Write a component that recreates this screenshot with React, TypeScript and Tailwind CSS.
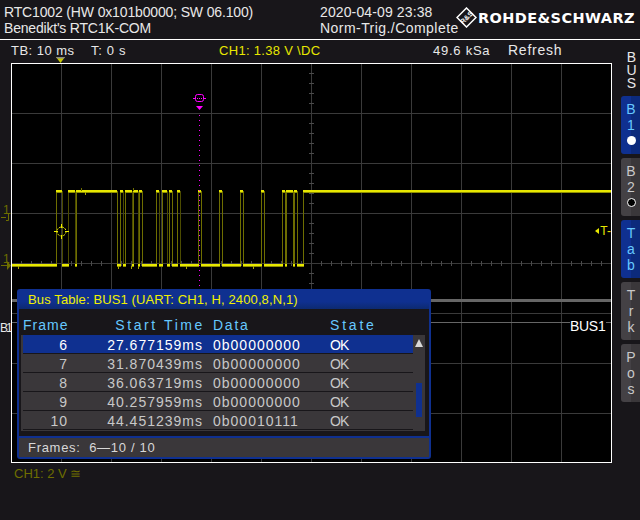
import React from 'react';

const highs: [number, number][] = [
  [56, 62], [68, 75], [76, 117], [120, 123], [125, 132], [133, 138], [139, 142],
  [156, 159], [162, 167], [169, 172], [177, 180], [198, 201], [219, 222], [240, 243],
  [261, 264], [282, 285], [286, 293], [294, 297], [303, 611],
];

const rows = [
  { frame: '6', time: '27.677159ms', data: '0b00000000' },
  { frame: '7', time: '31.870439ms', data: '0b00000000' },
  { frame: '8', time: '36.063719ms', data: '0b00000000' },
  { frame: '9', time: '40.257959ms', data: '0b00000000' },
  { frame: '10', time: '44.451239ms', data: '0b00010111' },
];

const range = (from: number, to: number, step: number) => {
  const out: number[] = [];
  for (let v = from; v <= to; v += step) out.push(v);
  return out;
};

const Level: React.FC<{ x: number; y: number; w: number }> = ({ x, y, w }) => (
  <>
    <rect x={x} y={y} width={w} height={3} fill="#8f8f00" />
    <rect x={x} y={y} width={w} height={2} fill="#e8e800" />
  </>
);

const Scope: React.FC = () => {
  const lows: [number, number][] = [];
  let prev = 12;
  highs.forEach(([a, b]) => {
    lows.push([prev, a + 1]);
    prev = b;
  });

  return (
    <svg className="absolute inset-0 h-full w-full" viewBox="12 64 599 398" shapeRendering="crispEdges">
      {range(61, 561, 50).map((x) => (
        <line key={x} x1={x + 0.5} x2={x + 0.5} y1={64} y2={462} stroke="#3a3a3a" />
      ))}
      {range(113, 413, 50).map((y) => (
        <line key={y} x1={12} x2={611} y1={y + 0.5} y2={y + 0.5} stroke="#3a3a3a" />
      ))}
      {range(21, 601, 10).filter((x) => x % 50 !== 11).map((x) => (
        <line key={x} x1={x + 0.5} x2={x + 0.5} y1={261} y2={266} stroke="#4a4a4a" />
      ))}
      {range(73, 453, 10).filter((y) => y % 50 !== 13).map((y) => (
        <line key={y} x1={309} x2={314} y1={y + 0.5} y2={y + 0.5} stroke="#4a4a4a" />
      ))}

      <rect x={12} y={299} width={599} height={3} fill="#666666" />
      <line x1={12} x2={570} y1={322.5} y2={322.5} stroke="#666666" />
      <line x1={606} x2={611} y1={322.5} y2={322.5} stroke="#666666" />

      {highs.map(([a, b]) => (
        <g key={a} stroke="#6e6e00">
          <line x1={a + 0.5} x2={a + 0.5} y1={191} y2={266} />
          {b < 600 && <line x1={b + 0.5} x2={b + 0.5} y1={191} y2={266} />}
        </g>
      ))}
      {[62.5, 68.5, 75.5, 123.5, 132.5, 138.5, 159.5, 167.5, 180.5].map((x) => (
        <line key={x} x1={x} x2={x} y1={191} y2={266} stroke="#4c4c00" />
      ))}
      {highs.map(([a, b]) => (
        <Level key={a} x={a} y={190} w={b - a} />
      ))}
      {lows.map(([a, b]) => (
        <Level key={a} x={a} y={264} w={b - a} />
      ))}
      {[18, 118, 131, 138, 186, 253].map((x) => (
        <line key={x} x1={x + 0.5} x2={x + 0.5} y1={266} y2={269} stroke="#a8a800" />
      ))}
      <line x1={85.5} x2={85.5} y1={192} y2={195} stroke="#a8a800" />
      <line x1={81.5} x2={81.5} y1={188} y2={191} stroke="#6e6e00" />
      <line x1={133.5} x2={133.5} y1={188} y2={191} stroke="#6e6e00" />

      <circle cx={61.5} cy={231.5} r={4.5} fill="none" stroke="#f0f000" strokeDasharray="2 1" shapeRendering="auto" />
      <path d="M54 231.5h4M65 231.5h4M61.5 224v4M61.5 235v4" stroke="#f0f000" />

      {range(115, 285, 5).map((y) => (
        <rect key={y} x={199} y={y} width={1} height={1} fill="#ff00ff" />
      ))}
      <rect x={195.5} y={94.5} width={8} height={7} rx={2} fill="none" stroke="#ff00ff" shapeRendering="auto" />
      <path d="M193 98.5h3M203 98.5h3" stroke="#ff00ff" />
      <path d="M197 98.5h5" stroke="#ff00ff" strokeDasharray="1 1" />
      <path d="M196 106h7l-3.5 4z" fill="#ff00ff" shapeRendering="auto" />
    </svg>
  );
};

const SideButton: React.FC<{ active?: boolean; children: React.ReactNode }> = ({ active, children }) => (
  <div
    className={
      active
        ? 'flex h-[58px] flex-col items-center rounded-l-[3px] bg-[linear-gradient(90deg,#0f3090_50%,#0c2a7c_50%)] pl-[1px] pt-[5px] text-[14px] leading-[16px] text-[#66c8ff]'
        : 'flex h-[58px] flex-col items-center rounded-l-[3px] bg-[linear-gradient(90deg,#444145_50%,#3a373a_50%)] pl-[1px] pt-[5px] text-[14px] leading-[16px] text-[#c8c8c8]'
    }
  >
    {children}
  </div>
);

export default function App() {
  return (
    <div className="flex h-[520px] w-[640px] flex-col overflow-hidden bg-[#18161a] font-['Liberation_Sans',sans-serif] text-[#e8e8e8]">
      <header className="flex h-[40px] shrink-0 border-b border-white pt-[4px] text-[14px] leading-[16px]">
        <div className="w-[320px] whitespace-nowrap pl-[4px]">
          <div className="tracking-[-0.15px]">RTC1002 (HW 0x101b0000; SW 06.100)</div>
          <div className="tracking-[-0.2px]">Benedikt's RTC1K-COM</div>
        </div>
        <div className="w-[136px] whitespace-nowrap">
          <div className="tracking-[0.12px]">2020-04-09 23:38</div>
          <div className="tracking-[0.45px]">Norm-Trig./Complete</div>
        </div>
        <div className="flex items-center gap-[1px] pb-[8px]">
          <svg width="21" height="21" viewBox="0 0 21 21">
            <path d="M10.5 1 20 10.5 10.5 20 1 10.5z" fill="none" stroke="#ffffff" strokeWidth="1.5" />
            <text x="10.5" y="13" fontSize="7" fontWeight="700" fill="#ffffff" textAnchor="middle" transform="rotate(-45 10.5 10.5)" fontFamily="Liberation Sans">R&amp;S</text>
          </svg>
          <span className="whitespace-nowrap font-['DejaVu_Sans',sans-serif] text-[14.5px] font-bold tracking-[0.4px] text-white">ROHDE&amp;SCHWARZ</span>
        </div>
      </header>

      <div className="flex flex-1">
        <div className="flex w-[621px] shrink-0 flex-col">
          <div className="relative flex h-[23px] items-center whitespace-nowrap pb-[2px] text-[13px]">
            <span className="ml-[11px] w-[80px] tracking-[0.47px]">TB: 10 ms</span>
            <span className="w-[128px] tracking-[0.67px]">T: 0 s</span>
            <span className="w-[214px] tracking-[0.3px] text-[#e8e800]">CH1: 1.38 V \DC</span>
            <span className="w-[75px] tracking-[0.75px]">49.6 kSa</span>
            <span className="text-[14px] tracking-[0.75px]">Refresh</span>
            <svg className="absolute left-[56px] top-[17px]" width="10" height="6" viewBox="0 0 10 6">
              <path d="M0 0h9L4.5 6z" fill="#c8c800" />
              <path d="M0 0h9L8 1.5H1z" fill="#888888" />
            </svg>
          </div>

          <div className="flex h-[400px]">
            <div className="relative w-[11px] text-[#6e6e00]">
              <span className="absolute left-[3px] top-[140px] text-[12px] leading-[14px]">1</span>
              <svg className="absolute left-[1px] top-[148px]" width="10" height="12" viewBox="0 0 10 12">
                <path d="M0 6.5h5M9.5 2.5H7.5V9.5H5" fill="none" stroke="#6e6e00" />
              </svg>
              <span className="absolute left-[3px] top-[189px] text-[12px] leading-[14px]">1</span>
              <svg className="absolute left-[1px] top-[197px]" width="10" height="10" viewBox="0 0 10 10">
                <path d="M0 5.5h6" stroke="#6e6e00" />
                <path d="M6 1l4 4.5L6 10z" fill="#6e6e00" />
              </svg>
              <span className="absolute left-0 top-[257px] text-[12px] leading-[16px] tracking-[-2px] text-[#e8e8e8]">B1</span>
            </div>

            <div className="relative h-[400px] w-[601px] border border-white bg-black">
              <Scope />

              <div className="absolute right-0 top-[160px] flex items-center gap-[1px] text-[12px] leading-[14px] text-[#e8e800]">
                <svg width="4" height="6" viewBox="0 0 4 6"><path d="M0 3l4-3v6z" fill="#e8e800" /></svg>
                <span>T-</span>
              </div>
              <span className="absolute left-[558px] top-[254px] text-[14px] leading-[16px] tracking-[-0.3px] text-white">BUS1</span>

              <div className="absolute left-[5px] top-[225px] flex h-[170px] w-[414px] flex-col rounded-[3px] border-2 border-[#0f3090] bg-[#18161a] text-[14px] tracking-[1px]">
                <div className="flex h-[18px] shrink-0 items-center bg-[linear-gradient(180deg,#0f3090_60%,#0d2a70)] pl-[9px] text-[13px] tracking-[0.12px] text-[#f0f000]">
                  Bus Table: BUS1 (UART: CH1, H, 2400,8,N,1)
                </div>
                <div className="grid h-[26px] shrink-0 grid-cols-[45px_135px_127px_1fr] items-end pb-[1px] pl-[4px] leading-[18px] text-[#66c8ff]">
                  <span className="text-right">Frame</span>
                  <span className="mr-[-2px] text-right tracking-[2.6px]">Start Time</span>
                  <span className="pl-[10px] tracking-[1.75px]">Data</span>
                  <span className="tracking-[2.8px]">State</span>
                </div>
                <div className="ml-[2px] mr-[4px] flex h-[96px] shrink-0 bg-[#3a373a]">
                  <div className="w-[392px] pl-[2px]">
                    {rows.map((row, i) => (
                      <div
                        key={row.frame}
                        className={
                          i === 0
                            ? 'grid h-[19px] grid-cols-[45px_135px_127px_1fr] items-center border-b border-[#18161a] bg-[#0f3090] text-white'
                            : 'grid h-[19px] grid-cols-[45px_135px_127px_1fr] items-center border-b border-[#18161a] text-[#c8c8c8]'
                        }
                      >
                        <span className="text-right">{row.frame}</span>
                        <span className="text-right">{row.time}</span>
                        <span className="pl-[10px]">{row.data}</span>
                        <span className="tracking-[-0.8px]">OK</span>
                      </div>
                    ))}
                  </div>
                  <div className="flex flex-1 flex-col items-center pt-[4px]">
                    <div className="h-0 w-0 border-x-[4px] border-b-[8px] border-x-transparent border-b-[#d8d8d8]" />
                    <div className="mt-[36px] h-[34px] w-[6px] bg-[#0f3090]" />
                  </div>
                </div>
                <div className="h-[5px] shrink-0" />
                <div className="flex h-[21px] shrink-0 items-center border-t-2 border-[#0f3090] bg-[#3a373a] pl-[9px] pt-[1px] text-[13px] tracking-[0.7px] text-[#d8d8d8]">
                  Frames:&nbsp;&nbsp;6—10 / 10
                </div>
              </div>
            </div>
          </div>

          <div className="pl-[14px] pt-[3px] text-[13px] leading-[16px] text-[#6e6e00]">CH1: 2 V ≅</div>
        </div>

        <aside className="flex w-[19px] flex-col gap-[4px]">
          <div className="h-[52px] pl-[5px] pt-[11px] text-[14px] leading-[13px] text-[#e8e8e8]">
            <p className="w-[11px] break-all text-center">BUS</p>
          </div>
          <SideButton active>
            <p className="w-[11px] break-all text-center">B1</p>
            <span className="mt-[3px] h-[9px] w-[9px] rounded-full bg-white" />
          </SideButton>
          <SideButton>
            <p className="w-[11px] break-all text-center">B2</p>
            <span className="mt-[3px] h-[9px] w-[9px] rounded-full border border-white bg-black" />
          </SideButton>
          <SideButton active>
            <p className="w-[11px] break-all text-center">Tab</p>
          </SideButton>
          <SideButton>
            <p className="w-[11px] break-all text-center">Trk</p>
          </SideButton>
          <SideButton>
            <p className="w-[11px] break-all text-center">Pos</p>
          </SideButton>
        </aside>
      </div>
    </div>
  );
}
